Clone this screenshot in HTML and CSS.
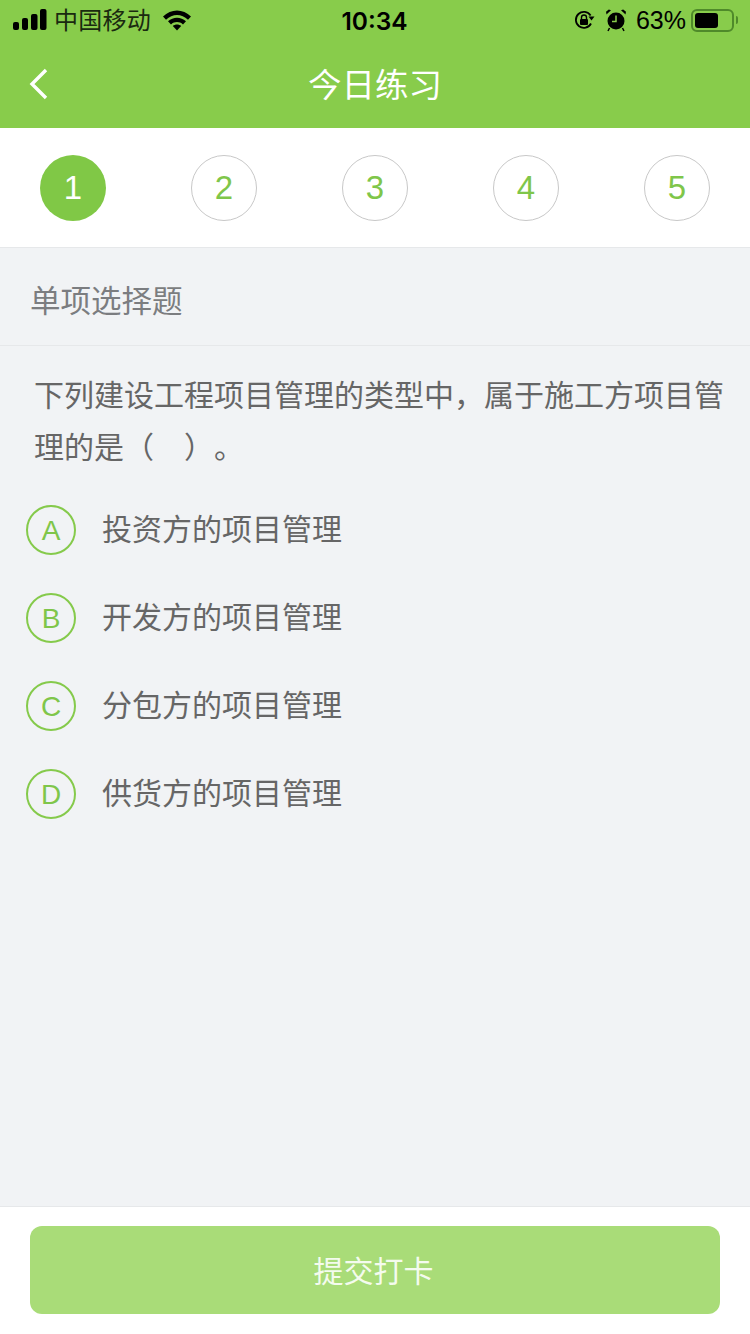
FILE: index.html
```html
<!DOCTYPE html>
<html lang="zh-CN">

<head>
    <meta charset="UTF-8">
    <meta name="viewport" content="width=device-width, initial-scale=1.0">
    <title>今日练习</title>
    <link rel="stylesheet" href="styles.css">
</head>

<body>
    <div class="page">
        <header class="top">
            <div class="status-bar">
                <div class="status-left">
                    <svg class="signal" width="34" height="22" viewBox="0 0 34 22">
                        <rect x="0" y="13" width="6" height="8" rx="2"/>
                        <rect x="9" y="9" width="6" height="12" rx="2"/>
                        <rect x="18" y="5" width="6.500" height="16" rx="2"/>
                        <rect x="27" y="0" width="6.500" height="21" rx="2"/>
                    </svg>
                    <span class="carrier">中国移动</span>
                    <svg class="wifi" width="28" height="21" viewBox="0 0 28 21">
                        <path d="M0 6.500C8-1.500 20-1.500 28 6.500L25 9.800C18.500 3.500 9.500 3.500 3 9.800z"/>
                        <path d="M5 11.300C10.200 6.500 17.800 6.500 23 11.300L20 14.500C16.500 11.300 11.500 11.300 8 14.500z"/>
                        <path d="M9.800 16C12.300 14 15.700 14 18.200 16L14 20.500z"/>
                    </svg>
                </div>
                <span class="clock">10:34</span>
                <div class="status-right">
                    <svg class="lock" width="22" height="22" viewBox="0 0 22 22">
                        <path d="M18 14.500A8 8 0 1 1 17.600 6.500" fill="none" stroke="#000" stroke-width="1.800"/>
                        <path d="M15.500 7.500h6l-3 4z" fill="#000"/>
                        <rect x="7" y="10" width="8" height="6" rx="1" fill="#000"/>
                        <path d="M8.500 10V8.500a2.500 2.500 0 0 1 5 0V10" fill="none" stroke="#000" stroke-width="1.400"/>
                    </svg>
                    <svg class="alarm" width="22" height="24" viewBox="0 0 22 24">
                        <circle cx="11" cy="13" r="8.500" fill="#000"/>
                        <path d="M1.500 6.500L6 2.200 3.800 1.500 1 3.800z" fill="#000"/>
                        <path d="M20.500 6.500L16 2.200 18.200 1.500 21 3.800z" fill="#000"/>
                        <path d="M4.500 20L3 23M17.500 20L19 23" stroke="#000" stroke-width="1.500"/>
                        <path d="M11 7.500V13.500H7" fill="none" stroke="#88cc4b" stroke-width="1.500"/>
                    </svg>
                    <span class="battery-text">63%</span>
                    <div class="battery">
                        <div class="battery-level"></div>
                    </div>
                    <div class="battery-cap"></div>
                </div>
            </div>
            <div class="nav-bar">
                <svg class="back" width="20" height="32" viewBox="0 0 20 32">
                    <path d="M17 2L3 16l14 14" fill="none" stroke="#fff" stroke-width="3.400"/>
                </svg>
                <h1 class="nav-title">今日练习</h1>
            </div>
        </header>

        <div class="steps">
            <div class="step active">1</div>
            <div class="step">2</div>
            <div class="step">3</div>
            <div class="step">4</div>
            <div class="step">5</div>
        </div>

        <main class="content">
            <div class="question-type">单项选择题</div>
            <div class="question">下列建设工程项目管理的类型中，属于施工方项目管理的是（　）。</div>
            <div class="options">
                <div class="option"><span class="option-mark">A</span><span class="option-text">投资方的项目管理</span></div>
                <div class="option"><span class="option-mark">B</span><span class="option-text">开发方的项目管理</span></div>
                <div class="option"><span class="option-mark">C</span><span class="option-text">分包方的项目管理</span></div>
                <div class="option"><span class="option-mark">D</span><span class="option-text">供货方的项目管理</span></div>
            </div>
        </main>

        <footer class="bottom">
            <button class="submit">提交打卡</button>
        </footer>
    </div>
</body>

</html>
```

FILE: styles.css
```css
* {
    box-sizing: border-box;
}
body {
    margin: 0;
    font-family: "Liberation Sans", "Noto Sans CJK SC", sans-serif;
    background-color: #f1f3f5;
}
.page {
    width: 750px;
    height: 1334px;
    display: flex;
    flex-direction: column;
    overflow: hidden;
}
.top {
    height: 128px;
    background-color: #88cc4b;
}
.status-bar {
    height: 40px;
    padding: 0 12px 0 13px;
    display: grid;
    grid-template-columns: 1fr auto 1fr;
    align-items: center;
    color: #000;
}
.status-left {
    display: flex;
    align-items: center;
}
.signal {
    fill: #000;
    margin-right: 7px;
}
.carrier {
    font-size: 24px;
    letter-spacing: 0.25px;
    margin-bottom: 3px;
    color: #1a2a10;
}
.wifi {
    fill: #000;
    margin-left: 12px;
}
.clock {
    font-family: "Inter", "Liberation Sans", sans-serif;
    font-size: 24.500px;
    font-weight: 600;
    padding: 2px 2px 0 0;
}
.status-right {
    display: flex;
    align-items: center;
    justify-content: flex-end;
}
.lock {
    margin-right: 10px;
}
.alarm {
    margin-right: 9px;
}
.battery-text {
    font-size: 25px;
    margin-right: 5px;
}
.battery {
    width: 43px;
    height: 23px;
    border: 2px solid #4f8a2a;
    border-radius: 6px;
    padding: 2px;
}
.battery-level {
    width: 23px;
    height: 15px;
    background-color: #000;
    border-radius: 3px;
}
.battery-cap {
    width: 2px;
    height: 8px;
    margin-left: 2px;
    background-color: #4f8a2a;
    border-radius: 0 2px 2px 0;
}
.nav-bar {
    height: 88px;
    padding: 0 29px 4px;
    display: grid;
    grid-template-columns: 1fr auto 1fr;
    align-items: center;
}
.back {
    display: block;
    margin-top: 4px;
}
.nav-title {
    margin: 0;
    font-size: 33.500px;
    font-weight: normal;
    color: #fff;
}
.steps {
    height: 120px;
    padding: 0 40px;
    display: flex;
    justify-content: space-between;
    align-items: center;
    background-color: #fff;
    border-bottom: 1px solid #e6e8ea;
}
.step {
    width: 66px;
    height: 66px;
    border: 1px solid #c8c8c8;
    border-radius: 50%;
    display: flex;
    justify-content: center;
    align-items: center;
    font-size: 33px;
    color: #7fc64a;
}
.step.active {
    border: none;
    background-color: #80c846;
    color: #fff;
}
.content {
    flex: 1;
}
.question-type {
    height: 98px;
    padding: 5px 30px 0;
    display: flex;
    align-items: center;
    font-size: 30.500px;
    color: #7b7d80;
    border-bottom: 1px solid #e6e8ea;
}
.question {
    padding: 24px 20px 0 34px;
    font-size: 30px;
    line-height: 52px;
    color: #666;
    text-spacing-trim: space-all;
}
.options {
    padding: 9px 26px 0;
}
.option {
    height: 88px;
    display: flex;
    align-items: center;
}
.option-mark {
    width: 50px;
    height: 50px;
    margin-top: 6px;
    padding-top: 2px;
    border: 2px solid #85ca4b;
    border-radius: 50%;
    display: flex;
    justify-content: center;
    align-items: center;
    font-size: 28px;
    color: #7fc64a;
}
.option-text {
    margin-left: 26px;
    font-size: 30px;
    color: #666;
}
.bottom {
    height: 128px;
    padding: 19px 30px 20px;
    background-color: #fff;
    border-top: 1px solid #e6e8ea;
}
.submit {
    width: 100%;
    height: 88px;
    padding: 0 3px 3px 0;
    border: none;
    border-radius: 12px;
    background-color: #a9dc78;
    color: #f4fbee;
    font-family: inherit;
    font-size: 30px;
}
```
